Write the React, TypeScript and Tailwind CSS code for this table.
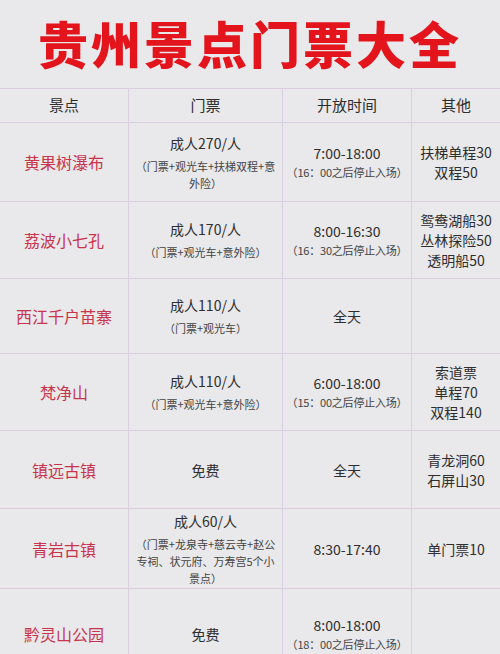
import React from 'react';

type Row = {
  name: string;
  price: string;
  priceNote?: string;
  time: string;
  timeNote?: string;
  other: string[];
  h: string;
};

const rows: Row[] = [
  {
    name: '黄果树瀑布',
    price: '成人270/人',
    priceNote: '（门票+观光车+扶梯双程+意外险）',
    time: '7:00-18:00',
    timeNote: '（16：00之后停止入场）',
    other: ['扶梯单程30', '双程50'],
    h: 'h-[79px]',
  },
  {
    name: '荔波小七孔',
    price: '成人170/人',
    priceNote: '（门票+观光车+意外险）',
    time: '8:00-16:30',
    timeNote: '（16：30之后停止入场）',
    other: ['鸳鸯湖船30', '丛林探险50', '透明船50'],
    h: 'h-[77px]',
  },
  {
    name: '西江千户苗寨',
    price: '成人110/人',
    priceNote: '（门票+观光车）',
    time: '全天',
    other: [],
    h: 'h-[75px]',
  },
  {
    name: '梵净山',
    price: '成人110/人',
    priceNote: '（门票+观光车+意外险）',
    time: '6:00-18:00',
    timeNote: '（15：00之后停止入场）',
    other: ['索道票', '单程70', '双程140'],
    h: 'h-[77px]',
  },
  {
    name: '镇远古镇',
    price: '免费',
    time: '全天',
    other: ['青龙洞60', '石屏山30'],
    h: 'h-[78px]',
  },
  {
    name: '青岩古镇',
    price: '成人60/人',
    priceNote: '（门票+龙泉寺+慈云寺+赵公专祠、状元府、万寿宫5个小景点）',
    time: '8:30-17:40',
    other: ['单门票10'],
    h: 'h-[80px]',
  },
  {
    name: '黔灵山公园',
    price: '免费',
    time: '8:00-18:00',
    timeNote: '（18：00之后停止入场）',
    other: [],
    h: 'h-[90px]',
  },
];

const cell = 'flex flex-col items-center justify-center text-center border-b border-[#dacfe0]';

export default function App() {
  return (
    <div
      className="w-[500px] h-[654px] overflow-hidden bg-[#e9e8ea]"
      style={{ fontFamily: '"Noto Sans CJK SC", "Noto Sans", sans-serif' }}
    >
      <div className="h-[88px] flex items-center justify-center pb-1">
        <h1 className="text-[50px] font-black text-[#e3141c] tracking-[3px] leading-none">贵州景点门票大全</h1>
      </div>

      <div className="grid grid-cols-[129px_154px_129px_88px] border-t border-[#dacfe0] text-[#2e2e2e]">
        {/* header */}
        <div className={`${cell} h-[34px] border-r text-[15px]`}>景点</div>
        <div className={`${cell} h-[34px] border-r text-[15px]`}>门票</div>
        <div className={`${cell} h-[34px] border-r text-[15px]`}>开放时间</div>
        <div className={`${cell} h-[34px] text-[15px]`}>其他</div>

        {rows.map((r) => (
          <React.Fragment key={r.name}>
            <div className={`${cell} ${r.h} border-r text-[16px] text-[#c8344c]`}>{r.name}</div>
            <div className={`${cell} ${r.h} border-r px-1`}>
              <div className="text-[14px] leading-[20px]">{r.price}</div>
              {r.priceNote && (
                <div className="text-[11px] leading-[17px] text-[#444] mt-[5px] px-[2px]">{r.priceNote}</div>
              )}
            </div>
            <div className={`${cell} ${r.h} border-r`}>
              <div className="text-[14px] leading-[20px]">{r.time}</div>
              {r.timeNote && (
                <div className="text-[11px] leading-[18px] text-[#444] tracking-[-0.2px]">{r.timeNote}</div>
              )}
            </div>
            <div className={`${cell} ${r.h}`}>
              {r.other.map((o) => (
                <div key={o} className="text-[14px] leading-[20px]">{o}</div>
              ))}
            </div>
          </React.Fragment>
        ))}
      </div>
    </div>
  );
}
